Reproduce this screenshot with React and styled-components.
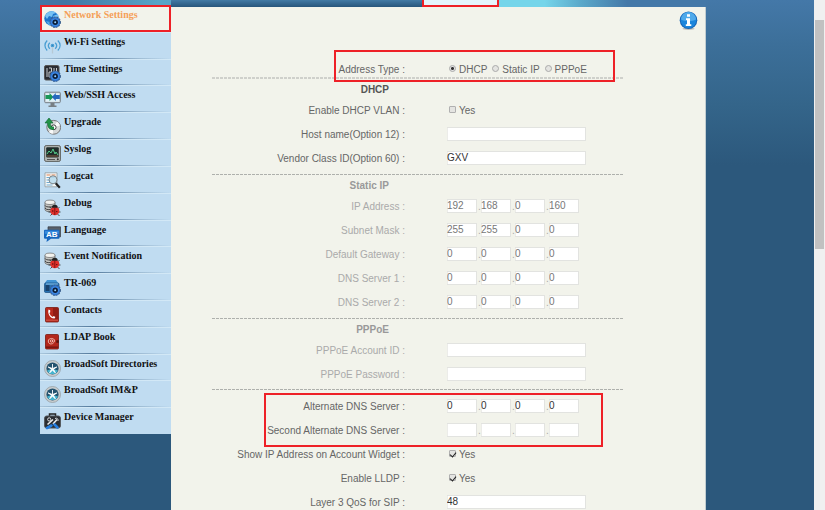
import React from 'react';
import styled, { createGlobalStyle, css } from 'styled-components';

const Global = createGlobalStyle`
  * { box-sizing: border-box; }
  body { margin: 0; overflow: hidden; background: #2c587c; font: 10px/12px "Liberation Sans", Arial, sans-serif; }
`;

const Page = styled.div`
  display: grid;
  grid-template-columns: minmax(0, 1fr) 11px;
  height: 100vh;
  overflow: hidden;
`;

const Backdrop = styled.div`
  padding: 0 108px 0 40px;
  background: #2c587c linear-gradient(#4478a8 0, #3c6f99 45px, #34658a 105px, #2c587c 165px) no-repeat;
`;

const TopBar = styled.header`
  display: grid;
  grid-template-columns: 131px 251px 77px 1fr;
  height: 7px;
`;

const Banner = styled.div`
  background: linear-gradient(100deg, #4277a5 20%, #58a5c8 90%);
`;

const TabStrip = styled.div`
  background: linear-gradient(#437aa5, #27557b);
`;

const ActiveTab = styled.div`
  background: #e4f5fd;
  border: 2px solid #ee2027;
  border-top: 0;
`;

const BannerEnd = styled.div`
  background: linear-gradient(90deg, #75d5ea 0, #75d5ea 22%, #5aa7c9 40%, #4478a8 62%);
`;

const Body = styled.div`
  display: flex;
  align-items: flex-start;
`;

const Sidebar = styled.nav`
  flex: 0 0 131px;
  margin-top: -2px;
  display: grid;
  grid-auto-rows: 1fr;
  min-height: 429px;
  background: #c0dcf1;
`;

const MenuLink = styled.a`
  display: flex;
  align-items: flex-start;
  gap: 3px;
  padding: 4px 0 0 4px;
  color: #111;
  font: bold 10px/12px "Liberation Serif", "Times New Roman", serif;
  text-decoration: none;
  white-space: nowrap;
  background: linear-gradient(90deg, #a9c6dc, #567c9e 40%, #9dbbd3 75%, #c0dcf1) bottom / 100% 1px no-repeat;
  box-shadow: inset 0 1px #d2e8f6;

  ${({ $active }) => $active && css`
    color: #f5a058;
    background: #f2f3eb;
    box-shadow: none;
    outline: 2px solid #ee2027;
    outline-offset: -2px;
  `}

  &:last-child { background: none; }
`;

const MenuIcon = styled.svg`
  flex: none;
  width: 17px;
  height: 17px;
  margin-top: 2px;
`;

const Panel = styled.main`
  flex: 1;
  display: flex;
  align-items: flex-start;
  min-height: 100vh;
  padding-left: 41px;
  background: #f2f3eb;
  border-right: 1px solid #c2cdd0;
`;

const Form = styled.form`
  flex: 0 1 412px;
  padding-top: 54px;
  color: #666;
`;

const InfoButton = styled.button`
  margin: 4px 7px 0 auto;
  padding: 0;
  width: 19px;
  height: 19px;
  border: 0;
  background: none;
  svg { display: block; }
`;

const Section = styled.section`
  padding-bottom: ${({ $last }) => ($last ? 3 : 4)}px;
  color: ${({ $muted }) => ($muted ? '#aaa' : '#666')};
`;

const Divider = styled.hr`
  height: ${({ $thick }) => ($thick ? 2 : 1)}px;
  margin: 0;
  border: 0;
  background: ${({ $thick }) => ($thick
    ? 'repeating-linear-gradient(90deg, #cfd0cb 0 3px, transparent 3px 4px)'
    : 'repeating-linear-gradient(90deg, #aeb0ac 0 3px, transparent 3px 4px)')};
`;

const Heading = styled.h2`
  width: 193px;
  margin: 0;
  padding: 2px 16px 0 0;
  font-size: 10px;
  line-height: 17px;
  text-align: right;
  color: ${({ $muted }) => ($muted ? '#999' : '#555')};
`;

const Row = styled.div`
  display: grid;
  grid-template-columns: 193px 1fr;
  column-gap: 42px;
  align-items: center;
  height: ${({ $short }) => ($short ? 16 : 24)}px;
  white-space: nowrap;
`;

const RowLabel = styled.label`
  justify-self: end;
  padding-top: 2px;
`;

const Outlined = styled.div`
  position: relative;
  &::after {
    content: "";
    position: absolute;
    inset: ${({ $inset }) => $inset};
    border: 2px solid #ee2027;
    pointer-events: none;
  }
`;

const AlternateServers = styled(Outlined)`
  margin-top: 4px;
`;

const TextInput = styled.input`
  display: block;
  width: ${({ $octet }) => ($octet ? 30 : 139)}px;
  height: 14px;
  padding: 0 0 1px;
  border: solid #e2e3e0;
  border-width: 1px 1px 1px 0;
  background: #fff;
  box-shadow: inset 1px 0 #ecece9;
  color: ${({ $muted }) => ($muted ? '#777' : '#333')};
  font: 10px/11px "Liberation Sans", Arial, sans-serif;
`;

const Octets = styled.div`
  display: grid;
  grid-template-columns: repeat(4, 30px);
  column-gap: 4px;
`;

const Octet = styled.span`
  position: relative;
  display: block;
  & + &::before {
    content: ".";
    position: absolute;
    left: -3px;
    top: 2px;
    color: #aaa;
  }
`;

const Choices = styled.div`
  display: flex;
  gap: 5px;
  padding: 2px 0 0 2px;
`;

const Choice = styled.label`
  display: flex;
  align-items: center;
  gap: 3px;
`;

const Radio = styled.input`
  appearance: none;
  width: 7px;
  height: 7px;
  margin: 0 0 3px;
  border: 1px solid #aaa;
  border-radius: 50%;
  background: #e4e4e1;
  &:checked { background: radial-gradient(circle, #333 0 1px, #e4e4e4 2px); }
`;

const Checkbox = styled.input`
  appearance: none;
  display: grid;
  place-items: center;
  width: 7px;
  height: 7px;
  margin: 0 0 3px;
  border: 1px solid #b0b0b0;
  border-radius: 1px;
  background: #e4e4e1;
  &:checked::after {
    content: "";
    width: 3px;
    height: 5px;
    border: solid #222;
    border-width: 0 1px 1px 0;
    rotate: 40deg;
  }
`;

const ScrollTrack = styled.div`
  padding: 20px 1px 0;
  background: #f0f0f0;
`;

const ScrollThumb = styled.div`
  height: 229px;
  background: #c1c1c1;
`;

const Gear = () => (
  <g>
    <circle cx="11.2" cy="11.2" r="5.2" fill="#2f74d0" stroke="#3b5f8c" strokeWidth="1.1" strokeDasharray="1.8 1" />
    <circle cx="11.2" cy="11.2" r="3.8" fill="#3f8be6" />
    <circle cx="11.2" cy="11.2" r="2.7" fill="#0c1e3a" />
    <circle cx="11.2" cy="11.2" r="1" fill="#9bd2fb" />
  </g>
);

const Bug = () => (
  <g>
    <path d="M1 3.5v7c0 3 10 3 10 0v-7" fill="#c5c5c1" stroke="#555" strokeWidth=".7" />
    <ellipse cx="6" cy="3.3" rx="5" ry="2.2" fill="#f2f2ee" stroke="#666" strokeWidth=".7" />
    <path d="M1 6.5c1 2 8 2 10 0M1 9c1 2 5 2 7 1" fill="none" stroke="#444" />
    <path d="M5.5 8l3 2m-4 3h4m-2 3.5 2-2m7-6.5-2 2m3 3h-3m2 4-2-2" stroke="#222" strokeWidth=".8" />
    <ellipse cx="10.8" cy="12" rx="4.6" ry="4.2" fill="#e0302c" />
    <path d="M7.8 8.8a3 3 0 0 1 6 0z" fill="#222" />
    <path d="M10.8 9v7" stroke="#6b0c0c" strokeWidth=".8" />
    <circle cx="8.8" cy="12" r=".7" fill="#4b0808" />
    <circle cx="12.8" cy="12.6" r=".7" fill="#4b0808" />
  </g>
);

const Star = () => (
  <g>
    <circle cx="8.5" cy="8.5" r="8" fill="#c8cdcf" stroke="#969fa4" strokeWidth=".8" />
    <circle cx="8.5" cy="8.5" r="6.1" fill="#24536f" />
    <path d="M3 10.5a6 6 0 0 0 11 0l-5.5-1.8z" fill="#45b4cf" />
    <path d="M8.5 4v4.5L12.8 7 9.4 9.2l2 3.6-2.9-2.6-2.9 2.6 2-3.6L4.2 7l4.3 1.5" fill="#fff" stroke="#fff" strokeWidth=".9" />
  </g>
);

const icons = {
  globe: (
    <g>
      <circle cx="7.5" cy="7.5" r="7.2" fill="#1c74cb" />
      <path d="M1 5C3 0 9-1 12 2L9 3 8 6 5 5 3 8zM9 5l5-2 1 5-4 1z" fill="#77c2f3" />
      <path d="M2 10l4 1 1 3-2 .5z" fill="#51a8e8" />
      <Gear />
    </g>
  ),
  wifi: (
    <g fill="none" stroke="#4a9ed2" strokeWidth="1.3">
      <path d="M3.2 2.5c-3 3-3 7 0 10M5.8 4.7c-2 2-2 4 0 6M13.8 2.5c3 3 3 7 0 10M11.2 4.7c2 2 2 4 0 6" />
      <circle cx="8.5" cy="7.5" r="1.2" fill="#267fc0" />
      <path d="M8.5 9v6.5" stroke="#b7c9d4" />
    </g>
  ),
  time: (
    <g>
      <rect x=".5" y=".5" width="14.5" height="14.5" rx="1.5" fill="#292c32" stroke="#555" />
      <path d="M3 3v9M5 3h2.5v4H5v5h3M10 3v4h2.5V3" fill="none" stroke="#c9ced2" />
      <Gear />
    </g>
  ),
  network: (
    <g>
      <rect x=".7" y="1.2" width="15.6" height="10.5" rx="1" fill="#d5dee3" stroke="#747d84" />
      <rect x="2" y="2.5" width="13" height="8" fill="#dff0f8" />
      <path d="M1.5 4h4V2l4 4-4 4V8h-4z" fill="#199758" />
      <path d="M15.8 4h-4V2l-4 4 4 4V8h4z" fill="#2668bd" />
      <path d="M6.5 12h4v2.5h2V16h-8v-1.5h2z" fill="#777e83" />
    </g>
  ),
  upgrade: (
    <g>
      <circle cx="9.7" cy="9.3" r="6.9" fill="#d5d8d8" stroke="#777" />
      <path d="M9.7 9.3 13 3.4a7 7 0 0 1 3 4zM9.7 9.3l-5 4.6a7 7 0 0 0 4 2z" fill="#f9fafa" />
      <circle cx="9.7" cy="9.3" r="2.4" fill="#fff" stroke="#444" />
      <path d="M10 11.5C5 12 3.5 9 3.7 5H1l4-5 4 5H6.3c0 3 .7 4 3.7 4" fill="#239449" stroke="#0d6331" strokeWidth=".6" />
    </g>
  ),
  syslog: (
    <g>
      <rect x=".6" y=".6" width="15.8" height="15.8" rx="1.5" fill="#b5b9b6" stroke="#5e625f" />
      <rect x="2.2" y="2.2" width="12.6" height="10.2" rx="1" fill="#1f2c2a" />
      <path d="M3 9l2-3 2 2 2-4 2 5 1-2 2 3" fill="none" stroke="#55c987" />
      <path d="M3 11h11" stroke="#b06a45" strokeWidth=".7" />
      <path d="M3 14.5h8" stroke="#555" />
      <circle cx="13.8" cy="14.2" r="1" fill="#333" />
    </g>
  ),
  logcat: (
    <g>
      <path d="M1 .8h12v14H1z" fill="#f6f8f7" stroke="#8e989d" strokeWidth=".8" />
      <path d="M2.5 3h4m1 0h4" stroke="#df8455" />
      <path d="M2.5 5.5h8M2.5 8h4M2.5 10.5h4M2.5 13h6" stroke="#6faad1" />
      <path d="M11.5 11l4.3 4.7" stroke="#222" strokeWidth="2.2" />
      <circle cx="9" cy="7.8" r="4" fill="#b7dbec" fillOpacity=".85" stroke="#7d878d" />
    </g>
  ),
  bug: <Bug />,
  language: (
    <g>
      <path d="M4 .8h12.5v10H4z" fill="#59616a" stroke="#353b42" strokeWidth=".7" />
      <path d="M1 3.8h13.5a1 1 0 0 1 1 1v7a1 1 0 0 1-1 1H7L2.5 16l.5-3.2H1a1 1 0 0 1-1-1v-7a1 1 0 0 1 1-1z" fill="#1767bf" />
      <path d="M.8 4.8h14v3H.8z" fill="#398bdd" />
      <text x="7.8" y="11.2" textAnchor="middle" fontFamily="Liberation Sans, sans-serif" fontWeight="700" fontSize="8" fill="#fff">AB</text>
    </g>
  ),
  camera: (
    <g>
      <path d="M3 1h9l2.5 3.5H.5z" fill="#4395d5" />
      <rect x=".5" y="4" width="14.5" height="9.5" rx="1.2" fill="#2672b4" stroke="#194c7e" strokeWidth=".7" />
      <path d="M1.5 6h4v6h-4z" fill="#17416d" />
      <path d="M2 5h12" stroke="#8ac4eb" />
      <Gear />
    </g>
  ),
  contacts: (
    <g>
      <rect x="1.5" y="1.5" width="13" height="14.5" rx="1" fill="#b72a1d" stroke="#791912" strokeWidth=".8" />
      <path d="M9 2h5v11.5H9z" fill="#921d14" />
      <path d="M2 14.2h12" stroke="#d2584a" />
      <path d="M4.6 3.5 6.2 4.3v2l-.8.6c.5 2 1.8 3.2 3.3 4l1-.8 1.7 1-.8 1.4c-4 .5-7.6-4.8-6-9z" fill="#fff" />
    </g>
  ),
  book: (
    <g>
      <rect x="1.5" y="1.5" width="13" height="14.5" rx="1" fill="#b3271c" stroke="#791912" strokeWidth=".8" />
      <path d="M2 14.2h12" stroke="#7b1711" strokeWidth="1.5" />
      <circle cx="7.5" cy="8" r="1.2" fill="none" stroke="#f2c1b5" strokeWidth=".9" />
      <path d="M8.7 6.8v1.6c0 1.3 2 1 2-.4 0-3.4-6.4-3.4-6.4 0s3 3.3 5 2.3" fill="none" stroke="#f2c1b5" strokeWidth=".9" />
      <path d="M12.3 7.3h2.5v2.5h-2.5z" fill="#551510" />
    </g>
  ),
  star: <Star />,
  device: (
    <g>
      <path d="M5.5 3V1h6v2" fill="none" stroke="#222" strokeWidth="1.5" />
      <rect x=".6" y="3" width="15.8" height="12" rx="2" fill="#292c31" stroke="#51555a" />
      <path d="M3.5 11.5 9 6.5M9 11l4-4.5" stroke="#e8ebed" strokeWidth="1.6" />
      <circle cx="5.2" cy="6.4" r="1.6" fill="none" stroke="#d9dcdf" />
      <path d="M11 5.5c2-1 3.5.5 3 2.5" fill="none" stroke="#d9dcdf" />
      <path d="m3 15 4.5-2.5m3-1 3 3" stroke="#267fe0" strokeWidth="2.6" strokeLinecap="round" />
    </g>
  ),
};

const menu = [
  ['Network Settings', 'globe'],
  ['Wi-Fi Settings', 'wifi'],
  ['Time Settings', 'time'],
  ['Web/SSH Access', 'network'],
  ['Upgrade', 'upgrade'],
  ['Syslog', 'syslog'],
  ['Logcat', 'logcat'],
  ['Debug', 'bug'],
  ['Language', 'language'],
  ['Event Notification', 'bug'],
  ['TR-069', 'camera'],
  ['Contacts', 'contacts'],
  ['LDAP Book', 'book'],
  ['BroadSoft Directories', 'star'],
  ['BroadSoft IM&P', 'star'],
  ['Device Manager', 'device'],
];

const zeros = ['0', '0', '0', '0'];
const blanks = ['', '', '', ''];

function TextRow({ id, label, value = '', type = 'text', muted }) {
  return (
    <Row>
      <RowLabel htmlFor={id}>{label} :</RowLabel>
      <TextInput id={id} type={type} defaultValue={value} $muted={muted} />
    </Row>
  );
}

function AddressRow({ id, label, values, muted }) {
  return (
    <Row>
      <RowLabel htmlFor={`${id}-0`}>{label} :</RowLabel>
      <Octets>
        {values.map((value, i) => (
          <Octet key={i}>
            <TextInput id={`${id}-${i}`} aria-label={`${label} ${i + 1}`} defaultValue={value} $octet $muted={muted} />
          </Octet>
        ))}
      </Octets>
    </Row>
  );
}

function CheckRow({ id, label, checked }) {
  return (
    <Row>
      <RowLabel htmlFor={id}>{label} :</RowLabel>
      <Choices>
        <Choice>
          <Checkbox id={id} type="checkbox" defaultChecked={checked} />
          Yes
        </Choice>
      </Choices>
    </Row>
  );
}

export default function App() {
  return (
    <>
      <Global />
      <Page>
        <Backdrop>
          <TopBar>
            <Banner />
            <TabStrip />
            <ActiveTab />
            <BannerEnd />
          </TopBar>
          <Body>
            <Sidebar>
              {menu.map(([label, icon], i) => (
                <MenuLink href="#" key={label} $active={i === 0}>
                  <MenuIcon viewBox="0 0 17 17" aria-hidden="true">{icons[icon]}</MenuIcon>
                  {label}
                </MenuLink>
              ))}
            </Sidebar>
            <Panel>
              <Form>
                <Outlined $inset="-11px 9px -5px 122px">
                  <Row $short>
                    <RowLabel as="span">Address Type :</RowLabel>
                    <Choices>
                      {['DHCP', 'Static IP', 'PPPoE'].map((name, i) => (
                        <Choice key={name}>
                          <Radio type="radio" name="address-type" defaultChecked={i === 0} />
                          {name}
                        </Choice>
                      ))}
                    </Choices>
                  </Row>
                </Outlined>
                <Section>
                  <Divider $thick />
                  <Heading>DHCP</Heading>
                  <CheckRow id="vlan" label="Enable DHCP VLAN" />
                  <TextRow id="host" label="Host name(Option 12)" />
                  <TextRow id="vendor" label="Vendor Class ID(Option 60)" value="GXV" />
                </Section>
                <Section $muted>
                  <Divider />
                  <Heading $muted>Static IP</Heading>
                  <AddressRow id="ip" label="IP Address" values={['192', '168', '0', '160']} muted />
                  <AddressRow id="mask" label="Subnet Mask" values={['255', '255', '0', '0']} muted />
                  <AddressRow id="gateway" label="Default Gateway" values={zeros} muted />
                  <AddressRow id="dns1" label="DNS Server 1" values={zeros} muted />
                  <AddressRow id="dns2" label="DNS Server 2" values={zeros} muted />
                </Section>
                <Section $muted $last>
                  <Divider />
                  <Heading $muted>PPPoE</Heading>
                  <TextRow id="account" label="PPPoE Account ID" muted />
                  <TextRow id="password" label="PPPoE Password" type="password" muted />
                </Section>
                <Divider />
                <AlternateServers $inset="-1px 21px -5px 52px">
                  <AddressRow id="alt1" label="Alternate DNS Server" values={zeros} />
                  <AddressRow id="alt2" label="Second Alternate DNS Server" values={blanks} />
                </AlternateServers>
                <CheckRow id="widget" label="Show IP Address on Account Widget" checked />
                <CheckRow id="lldp" label="Enable LLDP" checked />
                <TextRow id="qos" label="Layer 3 QoS for SIP" value="48" />
              </Form>
              <InfoButton type="button" aria-label="Information">
                <svg width="19" height="19" viewBox="0 0 19 19">
                  <ellipse cx="9.5" cy="17.8" rx="6" ry="1.1" fill="#999" opacity=".6" />
                  <circle cx="9.5" cy="9.2" r="8.8" fill="#1766b8" />
                  <circle cx="9.5" cy="9.2" r="7.8" fill="#1b85dc" />
                  <path d="M2 8.5a7.5 7.5 0 0 1 15 0c-4 2-11 2-15 0z" fill="#4fa9ea" />
                  <path d="M8 3.2h3v2.6H8zM7 7.3h4v6h1.3V15H6.8v-1.7H8V9H7z" fill="#fff" />
                </svg>
              </InfoButton>
            </Panel>
          </Body>
        </Backdrop>
        <ScrollTrack>
          <ScrollThumb />
        </ScrollTrack>
      </Page>
    </>
  );
}
